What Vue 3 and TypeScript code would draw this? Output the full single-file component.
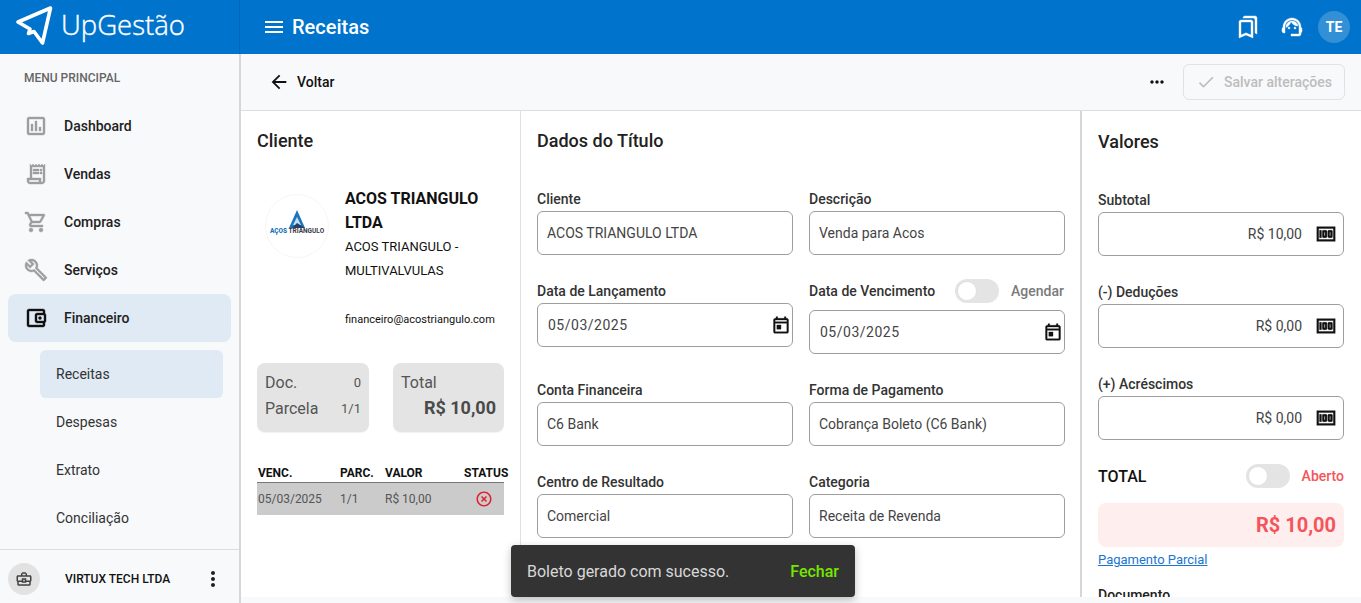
<script setup lang="ts">
const icons: Record<string, string> = {
  dashboard: 'M19 3H5c-1.1 0-2 .9-2 2v14c0 1.1.9 2 2 2h14c1.1 0 2-.9 2-2V5c0-1.1-.9-2-2-2zm0 16H5V5h14v14zM7 10h2v7H7zm4-3h2v10h-2zm4 6h2v4h-2z',
  vendas: 'M19.5 3.5L18 2l-1.5 1.5L15 2l-1.5 1.5L12 2l-1.5 1.5L9 2 7.5 3.5 6 2v14H3v3c0 1.66 1.34 3 3 3h12c1.66 0 3-1.34 3-3V2l-1.5 1.5zM15 20H6c-.55 0-1-.45-1-1v-1h10v2zm4-1c0 .55-.45 1-1 1s-1-.45-1-1v-3H8V5h11v14zM9 7h6v2H9zm7 0h2v2h-2zm-7 3h6v2H9zm7 0h2v2h-2z',
  compras: 'M15.55 13c.75 0 1.41-.41 1.75-1.03l3.58-6.49c.37-.66-.11-1.48-.87-1.48H5.21l-.94-2H1v2h2l3.6 7.59-1.35 2.44C4.52 15.37 5.48 17 7 17h12v-2H7l1.1-2h7.45zM6.16 6h12.15l-2.76 5H8.53L6.16 6zM7 18c-1.1 0-1.99.9-1.99 2S5.9 22 7 22s2-.9 2-2-.9-2-2-2zm10 0c-1.1 0-1.99.9-1.99 2s.89 2 1.99 2 2-.9 2-2-.9-2-2-2z',
  servicos: 'M22.61 18.99l-9.08-9.08c.93-2.34.45-5.1-1.44-7C9.79.61 6.21.4 3.66 2.25L7.5 6.1 6.08 7.51 2.25 3.69C.4 6.23.61 9.82 2.91 12.11c1.86 1.86 4.57 2.35 6.89 1.48l9.11 9.11c.39.39 1.02.39 1.41 0l2.3-2.3c.4-.38.4-1.01-.01-1.41zm-3 1.6l-9.46-9.46c-.61.45-1.29.72-2 .82-1.36.2-2.79-.21-3.83-1.25C3.37 9.76 2.93 8.5 3 7.26l3.09 3.09 4.24-4.24-3.09-3.09c1.24-.07 2.49.37 3.44 1.31 1.08 1.08 1.49 2.57 1.24 3.96-.12.71-.42 1.37-.88 1.96l9.45 9.45-.88.89z',
  financeiro: 'M21 7.28V5c0-1.1-.9-2-2-2H5c-1.11 0-2 .9-2 2v14c0 1.1.89 2 2 2h14c1.1 0 2-.9 2-2v-2.28c.59-.35 1-.98 1-1.72V9c0-.74-.41-1.38-1-1.72zM20 9v6h-7V9h7zM5 19V5h14v2h-6c-1.1 0-2 .9-2 2v6c0 1.1.9 2 2 2h6v2H5zm11-5.5a1.5 1.5 0 1 0 0-3 1.5 1.5 0 0 0 0 3z',
  menu: 'M3 18h18v-2H3v2zm0-5h18v-2H3v2zm0-7v2h18V6H3z',
  back: 'M20 11H7.83l5.59-5.59L12 4l-8 8 8 8 1.41-1.41L7.83 13H20v-2z',
  dots: 'M6 10c-1.1 0-2 .9-2 2s.9 2 2 2 2-.9 2-2-.9-2-2-2zm12 0c-1.1 0-2 .9-2 2s.9 2 2 2 2-.9 2-2-.9-2-2-2zm-6 0c-1.1 0-2 .9-2 2s.9 2 2 2 2-.9 2-2-.9-2-2-2z',
  vert: 'M12 8c1.1 0 2-.9 2-2s-.9-2-2-2-2 .9-2 2 .9 2 2 2zm0 2c-1.1 0-2 .9-2 2s.9 2 2 2 2-.9 2-2-.9-2-2-2zm0 6c-1.1 0-2 .9-2 2s.9 2 2 2 2-.9 2-2-.9-2-2-2z',
  check: 'M9 16.17L4.83 12l-1.42 1.41L9 19 21 7l-1.41-1.41z',
  bookmarks: 'M15 7v12.97l-4.21-1.81-.79-.34-.79.34L5 19.97V7h10m4-6H8.99C7.89 1 7 1.9 7 3h10c1.1 0 2 .9 2 2v13l2 1V3c0-1.1-.9-2-2-2zm-4 4H5c-1.1 0-2 .9-2 2v16l7-3 7 3V7c0-1.1-.9-2-2-2z',
  agent: 'M21 12.22C21 6.73 16.74 3 12 3c-4.69 0-9 3.65-9 9.28-.6.34-1 .98-1 1.72v2c0 1.1.9 2 2 2h1v-6.1c0-3.87 3.13-7 7-7s7 3.13 7 7V19h-8v2h8c1.1 0 2-.9 2-2v-1.22c.59-.31 1-.92 1-1.62v-2.3c0-.7-.41-1.31-1-1.64zM9 14a1 1 0 1 0 0-2 1 1 0 0 0 0 2zm6 0a1 1 0 1 0 0-2 1 1 0 0 0 0 2zm3-2.97C17.52 8.18 15.04 6 12.05 6c-3.03 0-6.29 2.51-6.03 6.45 2.47-1.01 4.33-3.21 4.86-5.89 1.31 2.63 4 4.44 7.12 4.47z',
  case: 'M20 7h-4V5l-2-2h-4L8 5v2H4c-1.1 0-2 .9-2 2v5c0 .75.4 1.38 1 1.73V19c0 1.11.89 2 2 2h14c1.11 0 2-.89 2-2v-3.28c.59-.35 1-.99 1-1.72V9c0-1.1-.9-2-2-2zM10 5h4v2h-4V5zM4 9h16v5h-5v-3H9v3H4V9zm9 6h-2v-2h2v2zm6 4H5v-3h4v1h6v-1h4v3z',
  event: 'M19 4h-1V2h-2v2H8V2H6v2H5c-1.11 0-1.99.9-1.99 2L3 20c0 1.1.89 2 2 2h14c1.1 0 2-.9 2-2V6c0-1.1-.9-2-2-2zm0 16H5V10h14v10zm0-12H5V6h14v2zM7 12h5v5H7z',
  money: 'M5 8h2v8H5zm7 0H9c-.55 0-1 .45-1 1v6c0 .55.45 1 1 1h3c.55 0 1-.45 1-1V9c0-.55-.45-1-1-1zm-1 6h-1v-4h1v4zm7-6h-3c-.55 0-1 .45-1 1v6c0 .55.45 1 1 1h3c.55 0 1-.45 1-1V9c0-.55-.45-1-1-1zm-1 6h-1v-4h1v4zM2 4v16h20V4H2zm2 14V6h16v12H4z',
  cancel: 'M14.59 8L12 10.59 9.41 8 8 9.41 10.59 12 8 14.59 9.41 16 12 13.41 14.59 16 16 14.59 13.41 12 16 9.41 14.59 8zM12 2C6.47 2 2 6.47 2 12s4.47 10 10 10 10-4.47 10-10S17.53 2 12 2zm0 18c-4.41 0-8-3.59-8-8s3.59-8 8-8 8 3.59 8 8-3.59 8-8 8z',
};

const menu = [
  { label: 'Dashboard', icon: 'dashboard' },
  { label: 'Vendas', icon: 'vendas' },
  { label: 'Compras', icon: 'compras' },
  { label: 'Serviços', icon: 'servicos' },
  { label: 'Financeiro', icon: 'financeiro', active: true },
];
const submenu = ['Receitas', 'Despesas', 'Extrato', 'Conciliação'];

const fields = [
  { label: 'Cliente', value: 'ACOS TRIANGULO LTDA' },
  { label: 'Descrição', value: 'Venda para Acos' },
  { label: 'Data de Lançamento', value: '05/03/2025', date: true },
  { label: 'Data de Vencimento', value: '05/03/2025', date: true, agendar: true },
  { label: 'Conta Financeira', value: 'C6 Bank' },
  { label: 'Forma de Pagamento', value: 'Cobrança Boleto (C6 Bank)' },
  { label: 'Centro de Resultado', value: 'Comercial' },
  { label: 'Categoria', value: 'Receita de Revenda' },
];
const valores = [
  { label: 'Subtotal', value: 'R$ 10,00' },
  { label: '(-) Deduções', value: 'R$ 0,00' },
  { label: '(+) Acréscimos', value: 'R$ 0,00' },
];
</script>

<template>
  <div class="app">
    <header class="topbar">
      <div class="brand">
        <svg class="brand__mark" viewBox="0 0 60 54" fill="none" stroke="#fff" stroke-width="3.6" stroke-linejoin="round" stroke-linecap="round">
          <path d="M50.500 8 18 22l12 7-1.500 4.500 5.500-2L42.500 43z" />
        </svg>
        <span class="brand__name">UpGestão</span>
      </div>
      <div class="topbar__title">
        <svg class="icon" viewBox="0 0 24 24"><path :d="icons.menu" /></svg>
        <span>Receitas</span>
      </div>
      <div class="topbar__actions">
        <svg class="icon icon--heavy" viewBox="0 0 24 24"><path :d="icons.bookmarks" /></svg>
        <svg class="icon icon--heavy" viewBox="0 0 24 24"><path :d="icons.agent" /></svg>
        <span class="avatar">TE</span>
      </div>
    </header>

    <div class="shell">
      <aside class="sidebar">
        <div class="sidebar__title">MENU PRINCIPAL</div>
        <nav class="nav">
          <a v-for="item in menu" :key="item.label" :class="['nav__item', { 'nav__item--active': item.active }]">
            <svg class="icon icon--heavy" viewBox="0 0 24 24"><path :d="icons[item.icon]" /></svg>
            <span>{{ item.label }}</span>
          </a>
          <a v-for="(item, i) in submenu" :key="item" :class="['nav__sub', { 'nav__sub--active': i === 0 }]">{{ item }}</a>
        </nav>
        <div class="company">
          <span class="company__logo">
            <svg class="icon" viewBox="0 0 24 24"><path :d="icons.case" /></svg>
          </span>
          <span class="company__name">VIRTUX TECH LTDA</span>
          <svg class="icon" viewBox="0 0 24 24"><path :d="icons.vert" /></svg>
        </div>
      </aside>

      <main class="main">
        <div class="toolbar">
          <a class="toolbar__back">
            <svg class="icon" viewBox="0 0 24 24"><path :d="icons.back" /></svg>
            <span>Voltar</span>
          </a>
          <svg class="icon toolbar__more" viewBox="0 0 24 24"><path :d="icons.dots" /></svg>
          <button class="save" type="button" disabled>
            <svg class="icon" viewBox="0 0 24 24"><path :d="icons.check" /></svg>
            Salvar alterações
          </button>
        </div>

        <div class="panels">
          <section class="client">
            <h2 class="title">Cliente</h2>
            <div class="client__card">
              <div class="client__logo">
                <svg viewBox="0 0 20 18" class="client__tri">
                  <path fill="#1c75bc" d="M10 0 18 18H2z" />
                  <path fill="#bfe0f5" d="M10 7 14 15H6z" />
                  <path fill="#2a3f66" d="M10 13 18 18H5z" />
                </svg>
                <span class="client__logotext"><b>AÇOS</b> TRIÂNGULO</span>
              </div>
              <div class="client__info">
                <div class="client__name">ACOS TRIANGULO LTDA</div>
                <div class="client__fantasy">ACOS TRIANGULO - MULTIVALVULAS</div>
                <div class="client__mail">financeiro@acostriangulo.com</div>
              </div>
            </div>

            <div class="stats">
              <div class="stat">
                <div class="stat__row"><span>Doc.</span><small>0</small></div>
                <div class="stat__row"><span>Parcela</span><small>1/1</small></div>
              </div>
              <div class="stat">
                <div class="stat__row"><span>Total</span></div>
                <div class="stat__total">R$ 10,00</div>
              </div>
            </div>

            <div class="parcels">
              <div class="parcels__head">
                <span>VENC.</span><span>PARC.</span><span>VALOR</span><span>STATUS</span>
              </div>
              <div class="parcels__row">
                <span>05/03/2025</span><span>1/1</span><span>R$ 10,00</span>
                <svg class="parcels__status" viewBox="0 0 24 24"><path :d="icons.cancel" /></svg>
              </div>
            </div>
          </section>

          <section class="data">
            <h2 class="title">Dados do Título</h2>
            <div class="form">
              <div v-for="field in fields" :key="field.label" class="field">
                <div :class="['field__label', { 'field__label--toggle': field.agendar }]">
                  <span>{{ field.label }}</span>
                  <template v-if="field.agendar">
                    <span class="toggle"></span>
                    <span class="field__hint">Agendar</span>
                  </template>
                </div>
                <div :class="['input', { 'input--date': field.date }]">
                  <span>{{ field.value }}</span>
                  <svg v-if="field.date" class="icon icon--heavy" viewBox="0 0 24 24"><path :d="icons.event" /></svg>
                </div>
              </div>
            </div>
          </section>

          <section class="values">
            <h2 class="title">Valores</h2>
            <div class="values__list">
              <div v-for="v in valores" :key="v.label" class="field">
                <div class="field__label"><span>{{ v.label }}</span></div>
                <div class="input input--money">
                  <span>{{ v.value }}</span>
                  <svg class="icon icon--heavy" viewBox="0 0 24 24"><path :d="icons.money" /></svg>
                </div>
              </div>
            </div>
            <div class="total">
              <span class="total__label">TOTAL</span>
              <span class="toggle"></span>
              <span class="total__status">Aberto</span>
            </div>
            <div class="total__box">R$ 10,00</div>
            <a class="partial">Pagamento Parcial</a>
            <div class="field__label doc">Documento</div>
          </section>
        </div>
      </main>
    </div>

    <div class="toast">
      <span>Boleto gerado com sucesso.</span>
      <a class="toast__close">Fechar</a>
    </div>
  </div>
</template>

<style>
html, body {
  margin: 0;
  height: 100%;
  overflow: hidden;
}
</style>

<style scoped>
.app {
  position: relative;
  display: flex;
  flex-direction: column;
  height: 100vh;
  overflow: hidden;
  background: #f8f9fb;
  color: #212121;
  font-family: Roboto, "Liberation Sans", sans-serif;
  font-size: 14px;
}

.icon {
  flex: none;
  width: 24px;
  height: 24px;
  fill: currentColor;
}

.icon--heavy {
  stroke: currentColor;
  stroke-width: .4;
}

.topbar {
  display: flex;
  flex: none;
  align-items: center;
  height: 54px;
  background: #0074cc;
  color: #fff;
}

.brand {
  display: flex;
  flex: none;
  align-items: center;
  width: 239px;
  height: 100%;
  border-right: 1px solid #0068b8;
}

.brand__mark {
  flex: none;
  width: 60px;
  height: 54px;
}

.brand__name {
  margin: -6px 0 0 1px;
  font-family: "Open Sans", sans-serif;
  font-size: 27.500px;
  font-weight: 300;
  -webkit-text-stroke: .4px #fff;
}

.topbar__title {
  display: flex;
  align-items: center;
  gap: 6px;
  margin-left: 22px;
  font-size: 20px;
  font-weight: 500;
}

.topbar__actions {
  display: flex;
  align-items: center;
  margin-left: auto;
  margin-right: 11px;
  gap: 20px;
}

.avatar {
  display: grid;
  place-items: center;
  width: 32px;
  height: 32px;
  margin-left: -6px;
  border-radius: 50%;
  background: rgba(255, 255, 255, .2);
  font-size: 14px;
  font-weight: 700;
}

.shell {
  display: flex;
  flex: 1;
  min-height: 0;
}

.sidebar {
  display: flex;
  flex: none;
  flex-direction: column;
  box-sizing: border-box;
  width: 241px;
  border-right: 2px solid #d6d6d6;
}

.sidebar__title {
  display: flex;
  align-items: center;
  height: 48px;
  padding-left: 24px;
  color: #666;
  font-size: 12px;
  font-weight: 500;
}

.nav {
  display: flex;
  flex: 1;
  flex-direction: column;
  padding: 0 8px;
}

.nav__item {
  display: flex;
  align-items: center;
  gap: 16px;
  height: 48px;
  padding-left: 16px;
  border-radius: 8px;
  font-weight: 500;
  color: #212121;
}

.nav__item .icon {
  color: #9e9e9e;
}

.nav__item--active {
  background: #dfeaf4;
}

.nav__item--active .icon {
  color: #111;
}

.nav__sub {
  display: flex;
  align-items: center;
  height: 48px;
  margin: 0 8px 0 32px;
  padding-left: 16px;
  border-radius: 6px;
  color: #333;
}

.nav__item--active + .nav__sub {
  margin-top: 8px;
}

.nav__sub--active {
  background: #dfeaf4;
}

.company {
  display: flex;
  flex: none;
  align-items: center;
  height: 53px;
  padding-left: 8px;
  border-top: 1px solid #dedede;
  color: #212121;
}

.company__logo {
  display: grid;
  flex: none;
  place-items: center;
  width: 32px;
  height: 32px;
  margin-top: 4px;
  border-radius: 50%;
  background: #e2e2e2;
  color: #424242;
}

.company__logo .icon {
  width: 18px;
  height: 18px;
}

.company__name {
  width: 136px;
  margin-left: 25px;
  margin-top: 4px;
  font-size: 12px;
  font-weight: 500;
  color: #111;
}

.company > .icon {
  margin-top: 4px;
}

.main {
  display: flex;
  flex: 1;
  flex-direction: column;
  min-width: 0;
  padding-bottom: 6px;
}

.toolbar {
  display: flex;
  flex: none;
  align-items: center;
  box-sizing: border-box;
  height: 57px;
  padding: 0 16px 0 30px;
  border-bottom: 1px solid #dedede;
}

.toolbar__back {
  display: flex;
  align-items: center;
  gap: 7px;
  color: #111;
  font-weight: 500;
}

.toolbar__back .icon {
  width: 22px;
  height: 22px;
  margin-left: -3px;
}

.toolbar__more {
  width: 20px;
  height: 20px;
  margin-left: auto;
  margin-right: 16px;
  color: #111;
}

.save {
  display: flex;
  align-items: center;
  gap: 8px;
  box-sizing: border-box;
  width: 162px;
  height: 36px;
  padding: 0 12px;
  border: 1px solid #e2e2e2;
  border-radius: 6px;
  background: transparent;
  color: #bdbdbd;
  font: 500 14px Roboto, sans-serif;
}

.save .icon {
  width: 20px;
  height: 20px;
}

.panels {
  display: grid;
  flex: 1;
  grid-template-columns: 280px 560px 280px;
  min-height: 0;
  overflow: hidden;
  background: #fff;
}

.title {
  margin: 0;
  font-size: 18px;
  font-weight: 500;
  line-height: 22px;
  color: #212121;
}

.client,
.data,
.values {
  box-sizing: border-box;
  padding: 19px 16px 0;
  overflow: hidden;
}

.client {
  border-right: 1px solid #e0e0e0;
}

.client__card {
  display: flex;
  margin-top: 35px;
}

.client__logo {
  display: flex;
  flex: none;
  flex-direction: column;
  align-items: center;
  justify-content: center;
  box-sizing: border-box;
  width: 64px;
  height: 64px;
  margin: 7px 16px 0 8px;
  padding-bottom: 8px;
  border: 1px solid #f8f6ee;
  border-radius: 50%;
}

.client__tri {
  width: 20px;
  height: 18px;
}

.client__logotext {
  color: #3a3a4a;
  font-size: 6.500px;
  font-weight: 700;
  line-height: 7px;
  white-space: nowrap;
}

.client__logotext b {
  color: #1c75bc;
}

.client__info {
  min-width: 0;
}

.client__name {
  font-size: 16px;
  font-weight: 700;
  line-height: 24px;
  color: #111;
}

.client__fantasy {
  font-size: 13px;
  line-height: 24px;
  color: #111;
}

.client__mail {
  margin-top: 29px;
  font-size: 11px;
  line-height: 16px;
  color: #111;
  white-space: nowrap;
}

.stats {
  display: grid;
  grid-template-columns: 112px 111px;
  column-gap: 24px;
  margin-top: 35px;
}

.stat {
  display: flex;
  flex-direction: column;
  gap: 4px;
  box-sizing: border-box;
  height: 69px;
  padding: 8px;
  border-radius: 8px;
  background: #e4e4e4;
  box-shadow: 0 1px 1px rgba(0, 0, 0, .05);
  color: #555;
}

.stat__row {
  display: flex;
  align-items: center;
  justify-content: space-between;
  height: 22px;
  font-size: 16px;
}

.stat__row small {
  font-size: 13px;
}

.stat__total {
  text-align: right;
  font-size: 18px;
  font-weight: 700;
  line-height: 22px;
  color: #4a4a4a;
}

.parcels {
  width: 247px;
  margin-top: 32px;
  font-size: 12px;
}

.parcels__head,
.parcels__row {
  display: grid;
  grid-template-columns: 82px 45px 79px 1fr;
  align-items: center;
  padding-left: 1px;
  white-space: nowrap;
}

.parcels__head {
  height: 18px;
  border-bottom: 1px solid #777;
  font-weight: 700;
  color: #111;
}

.parcels__row {
  height: 32px;
  background: #cbcbcb;
  color: #555;
}

.parcels__status {
  width: 18px;
  height: 18px;
  margin-left: 11px;
  fill: #e0202e;
}

.form {
  display: grid;
  grid-template-columns: 256px 256px;
  column-gap: 16px;
  row-gap: 28px;
  align-items: start;
  margin-top: 39px;
}

.field__label {
  display: flex;
  align-items: center;
  height: 16px;
  margin-bottom: 4px;
  font-size: 14px;
  font-weight: 500;
  line-height: 16px;
  color: #333;
}

.field__label--toggle {
  margin-bottom: 11px;
}

.field__hint {
  margin-left: 12px;
  color: #7a7a7a;
  font-weight: 500;
  font-size: 14px;
}

.toggle {
  position: relative;
  flex: none;
  display: block;
  box-sizing: border-box;
  width: 44px;
  height: 24px;
  margin-left: auto;
  border-radius: 12px;
  background: #e4e4e4;
}

.toggle::after {
  content: '';
  position: absolute;
  top: 2px;
  left: 2px;
  box-sizing: border-box;
  width: 20px;
  height: 20px;
  border: 1px solid #e0e0e0;
  border-radius: 50%;
  background: #fff;
}

.field__label--toggle .toggle {
  margin-left: 20px;
  margin-block: -4px;
}

.input {
  display: flex;
  align-items: center;
  justify-content: space-between;
  box-sizing: border-box;
  height: 44px;
  padding: 0 9px;
  border: 1px solid #9e9e9e;
  border-radius: 6px;
  background: #fff;
  color: #444;
  font-size: 14px;
}

.input .icon {
  width: 20px;
  height: 20px;
  color: #111;
}

.input--date {
  padding: 0 1px 0 10px;
  letter-spacing: .5px;
}

.input--money {
  justify-content: flex-end;
  gap: 13px;
  padding-right: 6px;
}

.input--money .icon {
  width: 22px;
  height: 22px;
}

.values {
  width: 281px;
  margin-left: -1px;
  padding-top: 20px;
  padding-right: 17px;
  border-left: 2px solid #d6d6d6;
}

.values__list {
  display: flex;
  flex-direction: column;
  gap: 28px;
  margin-top: 39px;
}

.total {
  display: flex;
  align-items: center;
  height: 24px;
  margin-top: 24px;
}

.total__label {
  font-size: 16px;
  font-weight: 500;
  color: #111;
}

.total__status {
  margin-left: 12px;
  color: #f4555a;
  font-weight: 500;
}

.total__box {
  box-sizing: border-box;
  height: 44px;
  margin-top: 15px;
  padding-right: 8px;
  border-radius: 8px;
  background: #ffeeee;
  color: #f4555a;
  font-size: 20px;
  font-weight: 700;
  line-height: 44px;
  text-align: right;
}

.partial {
  display: block;
  margin-top: 5px;
  color: #1976d2;
  font-size: 13px;
  line-height: 16px;
  text-decoration: underline;
}

.doc {
  margin-top: 19px;
  color: #212121;
}

.toast {
  position: absolute;
  bottom: 6px;
  left: 511px;
  display: flex;
  align-items: center;
  justify-content: space-between;
  box-sizing: border-box;
  width: 344px;
  height: 52px;
  padding: 0 16px;
  border-radius: 4px;
  background: #333;
  box-shadow: 0 3px 8px rgba(0, 0, 0, .25);
  color: #d8d8d8;
  font-size: 16px;
}

.toast__close {
  color: #76e600;
  font-weight: 500;
}
</style>
